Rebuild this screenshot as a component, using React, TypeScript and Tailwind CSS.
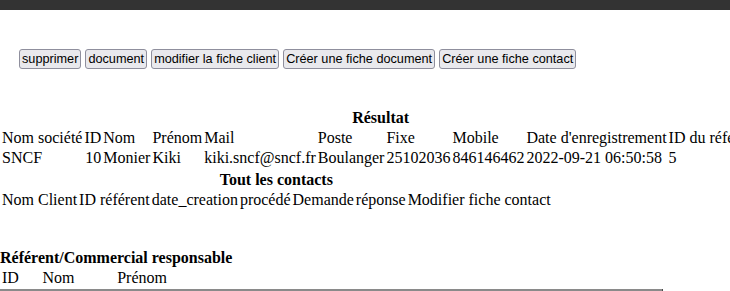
import * as React from 'react';

const actions = [
  'supprimer',
  'document',
  'modifier la fiche client',
  'Créer une fiche document',
  'Créer une fiche contact',
];

const resultHead = [
  'Nom société', 'ID', 'Nom', 'Prénom', 'Mail', 'Poste', 'Fixe', 'Mobile',
  "Date d'enregistrement", 'ID du référent',
];

const resultRow = [
  'SNCF', '10', 'Monier', 'Kiki', 'kiki.sncf@sncf.fr', 'Boulanger', '25102036',
  '846146462', '2022-09-21 06:50:58', '5',
];

const contactHead = [
  'Nom Client', 'ID référent', 'date_creation', 'procédé', 'Demande', 'réponse',
  'Modifier fiche contact',
];

const refHead = ['ID', 'Nom', 'Prénom'];

function DataTable({ caption, head, rows = [], className = '' }: {
  caption: string;
  head: string[];
  rows?: string[][];
  className?: string;
}) {
  return (
    <table className={`border-separate border-spacing-[2px] whitespace-nowrap ${className}`}>
      <caption className="font-bold text-center leading-[18px]">{caption}</caption>
      <tbody>
        <tr>
          {head.map((h) => (
            <td key={h} className="p-0 text-left align-middle">{h}</td>
          ))}
        </tr>
        {rows.map((r, i) => (
          <tr key={i}>
            {r.map((c, j) => (
              <td key={j} className={`p-0 align-middle ${j === 1 ? 'text-right' : 'text-left'}`}>{c}</td>
            ))}
          </tr>
        ))}
      </tbody>
    </table>
  );
}

export default function App() {
  return (
    <div className="w-[730px] h-[291px] overflow-hidden bg-white text-black">
      <div className="h-[10px] bg-[#333333]" />

      <div className="mt-[39px] pl-[19px] flex gap-[4px]">
        {actions.map((a) => (
          <button
            key={a}
            className="h-[20px] px-[2px] bg-[#e9e9ed] border border-[#8f8f9d] rounded-[3px] text-[12.7px] leading-[18px] text-black"
            style={{ fontFamily: '"Liberation Sans", Arial, sans-serif' }}
          >
            {a}
          </button>
        ))}
      </div>

      <div className="text-[16px] leading-[18px]" style={{ fontFamily: '"Liberation Serif", "Times New Roman", serif' }}>
        <DataTable className="mt-[40px]" caption="Résultat" head={resultHead} rows={[resultRow]} />
        <DataTable className="mt-[2px]" caption="Tout les contacts" head={contactHead} />
        <DataTable className="mt-[38px]" caption="Référent/Commercial responsable" head={refHead} />
        <div className="w-[663px] h-[2px] bg-[#8a8a8a] border-r border-[#4a4a4a]" />
      </div>
    </div>
  );
}
